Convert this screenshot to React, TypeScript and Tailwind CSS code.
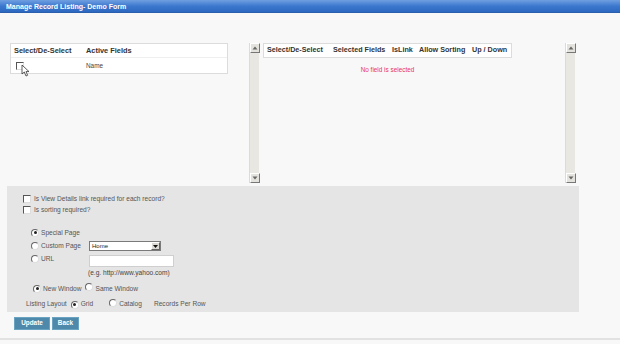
import React from "react";

const Check = () => (
  <span className="inline-block w-[8px] h-[8px] bg-white border-t border-l border-t-[#555] border-l-[#555] border-b border-r border-b-[#ddd] border-r-[#ddd] shrink-0" />
);

const Radio = ({ on }: { on?: boolean }) => (
  <span className="inline-flex items-center justify-center w-[8px] h-[8px] rounded-full bg-white border border-t-[#666] border-l-[#666] border-b-[#ddd] border-r-[#ddd] shrink-0">
    {on && <span className="w-[3px] h-[3px] rounded-full bg-[#222]" />}
  </span>
);

const ScrollBar = () => (
  <div className="w-[10px] h-[140px] bg-[#e9e7e2] flex flex-col justify-between border-l border-[#dedbd6]">
    <div className="w-[10px] h-[10px] bg-[#e4e2dc] border border-t-white border-l-white border-b-[#777] border-r-[#777] flex items-center justify-center">
      <svg width="6" height="4" viewBox="0 0 6 4"><path d="M3 0.5 L5.5 3.5 H0.5 Z" fill="#666" /></svg>
    </div>
    <div className="w-[10px] h-[10px] bg-[#e4e2dc] border border-t-white border-l-white border-b-[#777] border-r-[#777] flex items-center justify-center">
      <svg width="6" height="4" viewBox="0 0 6 4"><path d="M3 3.5 L5.5 0.5 H0.5 Z" fill="#666" /></svg>
    </div>
  </div>
);

export default function App() {
  return (
    <div
      className="w-[620px] h-[344px] bg-[#f8f8f8] overflow-hidden relative"
      style={{ fontFamily: '"Liberation Sans", Arial, sans-serif' }}
    >
      <div className="h-[13px] bg-gradient-to-b from-[#6f9fe0] via-[#3d78cf] to-[#2c68c0] flex items-center pl-[6px] border-b border-[#2a5fae]">
        <span className="text-white font-bold text-[7px] leading-none">Manage Record Listing- Demo Form</span>
      </div>

      <div className="flex items-start pt-[30px] pl-[10px]">
        <div className="relative w-[218px] h-[31px] bg-white border border-[#dcdcdc]">
          <div className="flex items-center h-[14px] border-b border-[#efefef] text-[7.4px] font-bold text-[#333] whitespace-nowrap">
            <span className="pl-[3px] w-[75px]">Select/De-Select</span>
            <span>Active Fields</span>
          </div>
          <div className="flex items-center h-[15px] text-[6.4px] text-[#444]">
            <span className="pl-[5px] w-[75px] flex items-center"><Check /></span>
            <span>Name</span>
          </div>
          <svg className="absolute left-[10px] top-[20px]" width="10" height="13" viewBox="0 0 10 13">
            <path d="M1 1 L1 10 L3.3 8 L5 12 L6.6 11.3 L5 7.6 L8 7.6 Z" fill="#fff" stroke="#333" strokeWidth="0.8" />
          </svg>
        </div>

        <div className="ml-[21px]">
          <ScrollBar />
        </div>

        <div className="ml-[4px] w-[302px] h-[140px] flex flex-col">
          <div className="w-[249px] h-[15px] bg-white border border-[#dcdcdc] flex items-center text-[7.2px] font-bold text-[#333] pl-[3px] whitespace-nowrap">
            <span className="w-[66px]">Select/De-Select</span>
            <span className="w-[59px]">Selected Fields</span>
            <span className="w-[27px]">IsLink</span>
            <span className="w-[53px]">Allow Sorting</span>
            <span>Up / Down</span>
          </div>
          <div className="w-[249px] text-center text-[6.4px] text-[#e8336a] mt-[7px]">No field is selected</div>
        </div>

        <ScrollBar />
      </div>

      <div className="ml-[7px] mt-[3px] w-[572px] h-[126px] bg-[#e5e5e5] text-[6.6px] text-[#555] pl-[16px] pt-[7px] whitespace-nowrap">
        <div className="flex items-center gap-[3px] h-[11px]">
          <Check />
          <span>Is View Details link required for each record?</span>
        </div>
        <div className="flex items-center gap-[3px] h-[11px]">
          <Check />
          <span>Is sorting required?</span>
        </div>
        <div className="pl-[8px] mt-[11px] flex flex-col">
          <div className="flex items-center gap-[2px] h-[13px]">
            <Radio on />
            <span>Special Page</span>
          </div>
          <div className="flex items-center h-[14px]">
            <Radio />
            <span className="ml-[2px] w-[48px]">Custom Page</span>
            <div className="w-[72px] h-[10px] bg-white border border-[#7a7a7a] flex items-center justify-between pl-[2px]">
              <span className="text-[6px] text-[#222]">Home</span>
              <span className="w-[9px] h-[8px] bg-[#dcdad4] border border-t-white border-l-white border-b-[#666] border-r-[#666] flex items-center justify-center">
                <svg width="5" height="3" viewBox="0 0 5 3"><path d="M0 0 H5 L2.5 3 Z" fill="#111" /></svg>
              </span>
            </div>
          </div>
          <div className="flex items-start h-[25px] pt-[2px]">
            <Radio />
            <span className="ml-[2px] w-[48px] leading-[8px]">URL</span>
            <div className="flex flex-col">
              <div className="w-[85px] h-[12px] bg-white border border-[#cfcfcf]" />
              <span className="mt-[1px] -ml-[1px] text-[#444]">(e.g. http://www.yahoo.com)</span>
            </div>
          </div>
          <div className="flex items-center h-[13px] mt-[4px] pl-[2px]">
            <Radio on />
            <span className="ml-[2px]">New Window</span>
            <span className="ml-[4px]"><Radio /></span>
            <span className="ml-[2px]">Same Window</span>
          </div>
        </div>
        <div className="flex items-center h-[14px] mt-[2px] pl-[3px]">
          <span>Listing Layout</span>
          <span className="ml-[4px]"><Radio on /></span>
          <span className="ml-[2px]">Grid</span>
          <span className="ml-[16px]"><Radio /></span>
          <span className="ml-[2px]">Catalog</span>
          <span className="ml-[12px]">Records Per Row</span>
        </div>
      </div>

      <div className="flex gap-[2px] ml-[14px] mt-[5px]">
        <button className="w-[36px] h-[13px] bg-[#4e88ab] border border-[#6aa2c2] text-white font-bold text-[6.4px] leading-none">Update</button>
        <button className="w-[27px] h-[13px] bg-[#4e88ab] border border-[#6aa2c2] text-white font-bold text-[6.4px] leading-none">Back</button>
      </div>

      <div className="absolute left-0 right-0 top-[338px] h-[2px] bg-[#e2e2e2]" />
    </div>
  );
}
